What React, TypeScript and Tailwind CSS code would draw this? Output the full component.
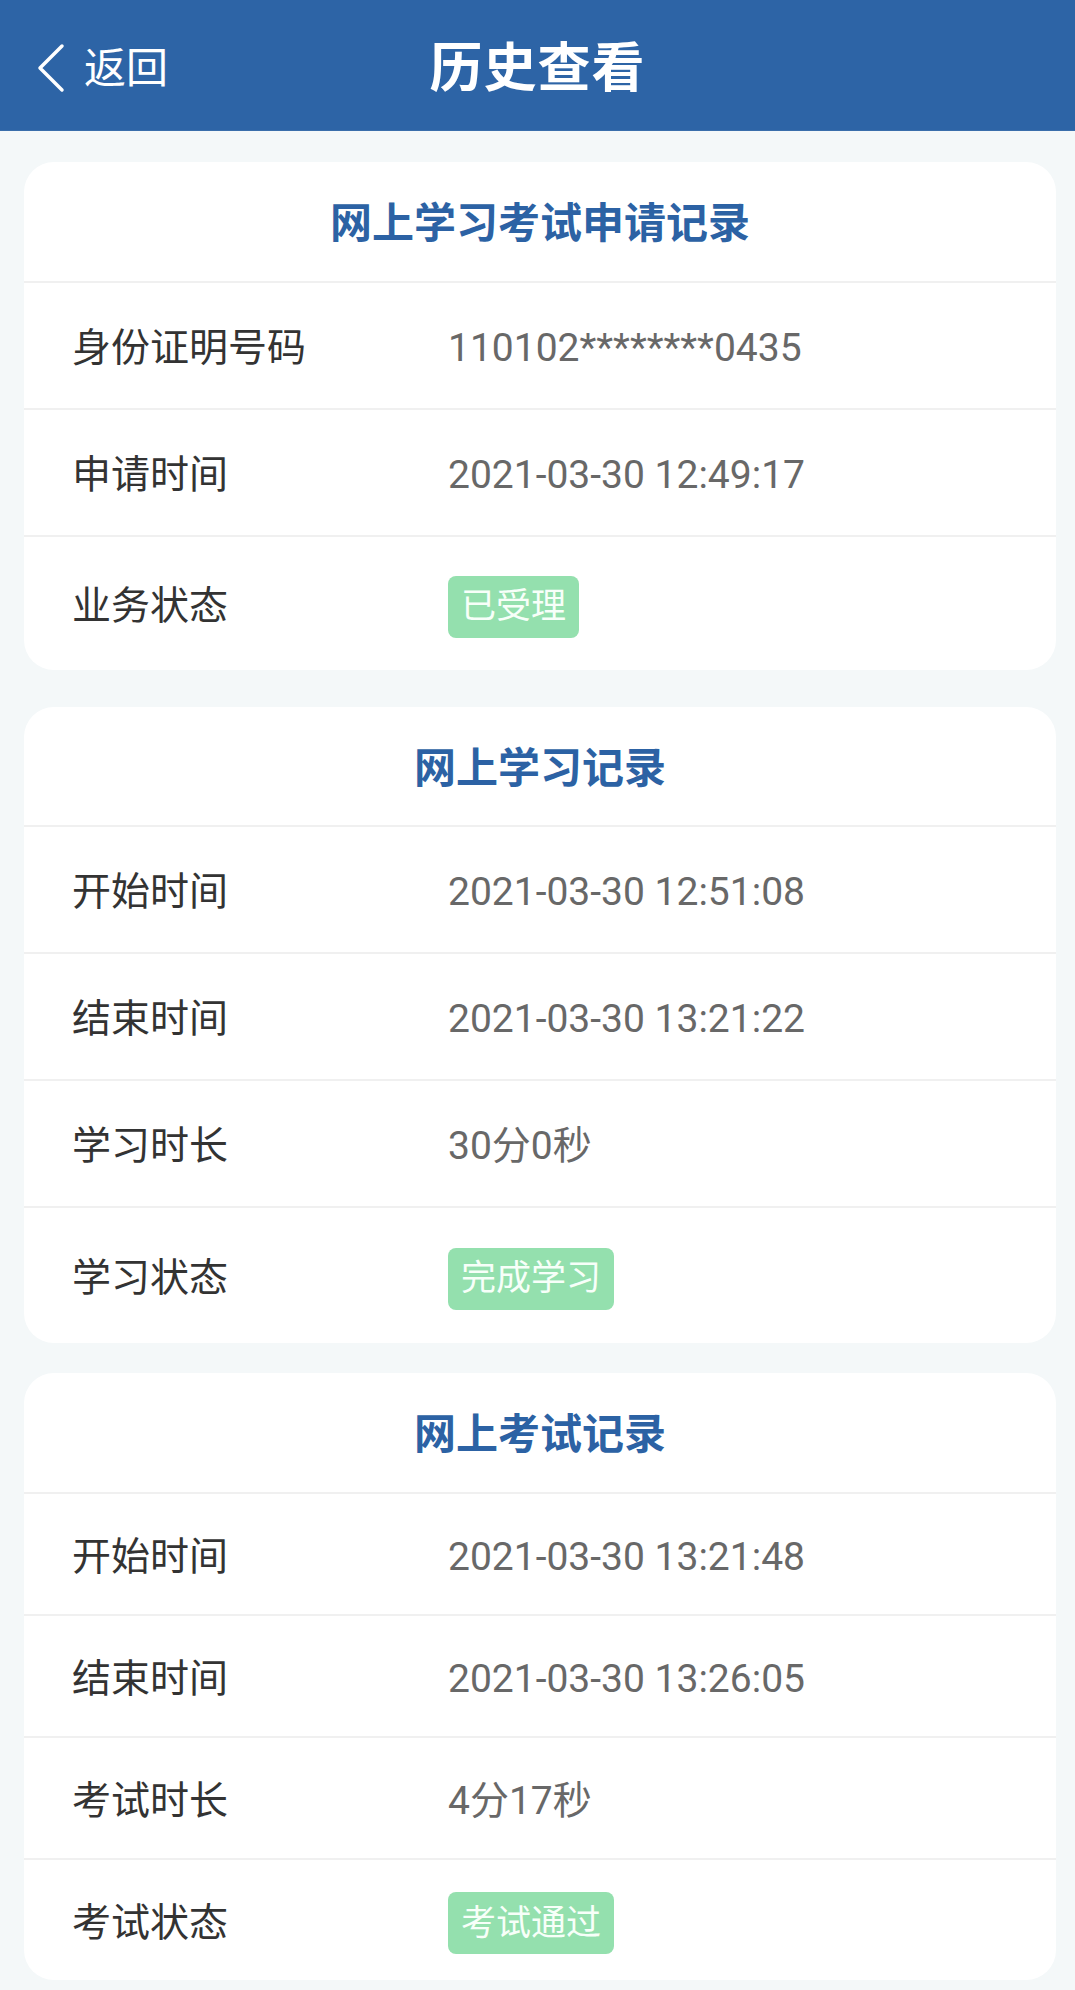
import React from "react";

type Row = { label: string; value?: string; badge?: string; h: string };
type Card = { title: string; headH: string; rows: Row[]; extra: string };

const cards: Card[] = [
  {
    title: "网上学习考试申请记录",
    headH: "h-[121px]",
    extra: "mt-[31px] h-[508px]",
    rows: [
      { label: "身份证明号码", value: "110102********0435", h: "h-[127px]" },
      { label: "申请时间", value: "2021-03-30 12:49:17", h: "h-[127px]" },
      { label: "业务状态", badge: "已受理", h: "h-[133px]" },
    ],
  },
  {
    title: "网上学习记录",
    headH: "h-[120px]",
    extra: "mt-[37px] h-[636px]",
    rows: [
      { label: "开始时间", value: "2021-03-30 12:51:08", h: "h-[127px]" },
      { label: "结束时间", value: "2021-03-30 13:21:22", h: "h-[127px]" },
      { label: "学习时长", value: "30分0秒", h: "h-[127px]" },
      { label: "学习状态", badge: "完成学习", h: "h-[135px]" },
    ],
  },
  {
    title: "网上考试记录",
    headH: "h-[121px]",
    extra: "mt-[30px] h-[607px]",
    rows: [
      { label: "开始时间", value: "2021-03-30 13:21:48", h: "h-[122px]" },
      { label: "结束时间", value: "2021-03-30 13:26:05", h: "h-[122px]" },
      { label: "考试时长", value: "4分17秒", h: "h-[122px]" },
      { label: "考试状态", badge: "考试通过", h: "h-[120px]" },
    ],
  },
];

const cjk = { fontFamily: 'Roboto, "Noto Sans CJK SC", sans-serif' };

export default function App() {
  return (
    <div className="w-[1075px] h-[1990px] bg-[#f4f8f9] flex flex-col" style={cjk}>
      <header className="h-[131px] shrink-0 bg-[#2d64a6] grid grid-cols-[1fr_auto_1fr] items-center pt-[8px] text-white border-b border-[#3a6eab]">
        <div className="flex items-center pl-[36px]">
          <svg width="30" height="50" viewBox="0 0 30 50" fill="none" className="shrink-0 -mt-[2px]">
            <path d="M26 3 L4 25 L26 47" stroke="white" strokeWidth="3.5" strokeLinecap="round" strokeLinejoin="round" />
          </svg>
          <span className="ml-[18px] text-[42px] leading-none">返回</span>
        </div>
        <div className="text-[53px] font-bold leading-none tracking-[1px]">历史查看</div>
        <div />
      </header>

      {cards.map((c, i) => (
        <section
          key={i}
          className={`${c.extra} ml-[24px] mr-[19px] shrink-0 bg-white rounded-[30px] overflow-hidden flex flex-col`}
        >
          <div
            className={`${c.headH} shrink-0 flex items-center justify-center pt-[5px] border-b-2 border-[#f0f0f0] text-[42px] font-bold text-[#2c62a4] leading-none`}
          >
            {c.title}
          </div>
          {c.rows.map((r, j) => (
            <div
              key={j}
              className={`${r.h} shrink-0 flex items-center pl-[48px] pt-[6px] ${
                j < c.rows.length - 1 ? "border-b-2 border-[#f0f0f0]" : ""
              }`}
            >
              <div className="w-[376px] shrink-0 text-[39px] text-[#333333] leading-none">{r.label}</div>
              {r.value && (
                <div className="text-[39px] text-[#686868] leading-none">{r.value}</div>
              )}
              {r.badge && (
                <div className="h-[62px] px-[13px] flex items-center rounded-[8px] bg-[#94e0ae] text-[35px] text-[#f7fff9] leading-none">
                  {r.badge}
                </div>
              )}
            </div>
          ))}
        </section>
      ))}
    </div>
  );
}
